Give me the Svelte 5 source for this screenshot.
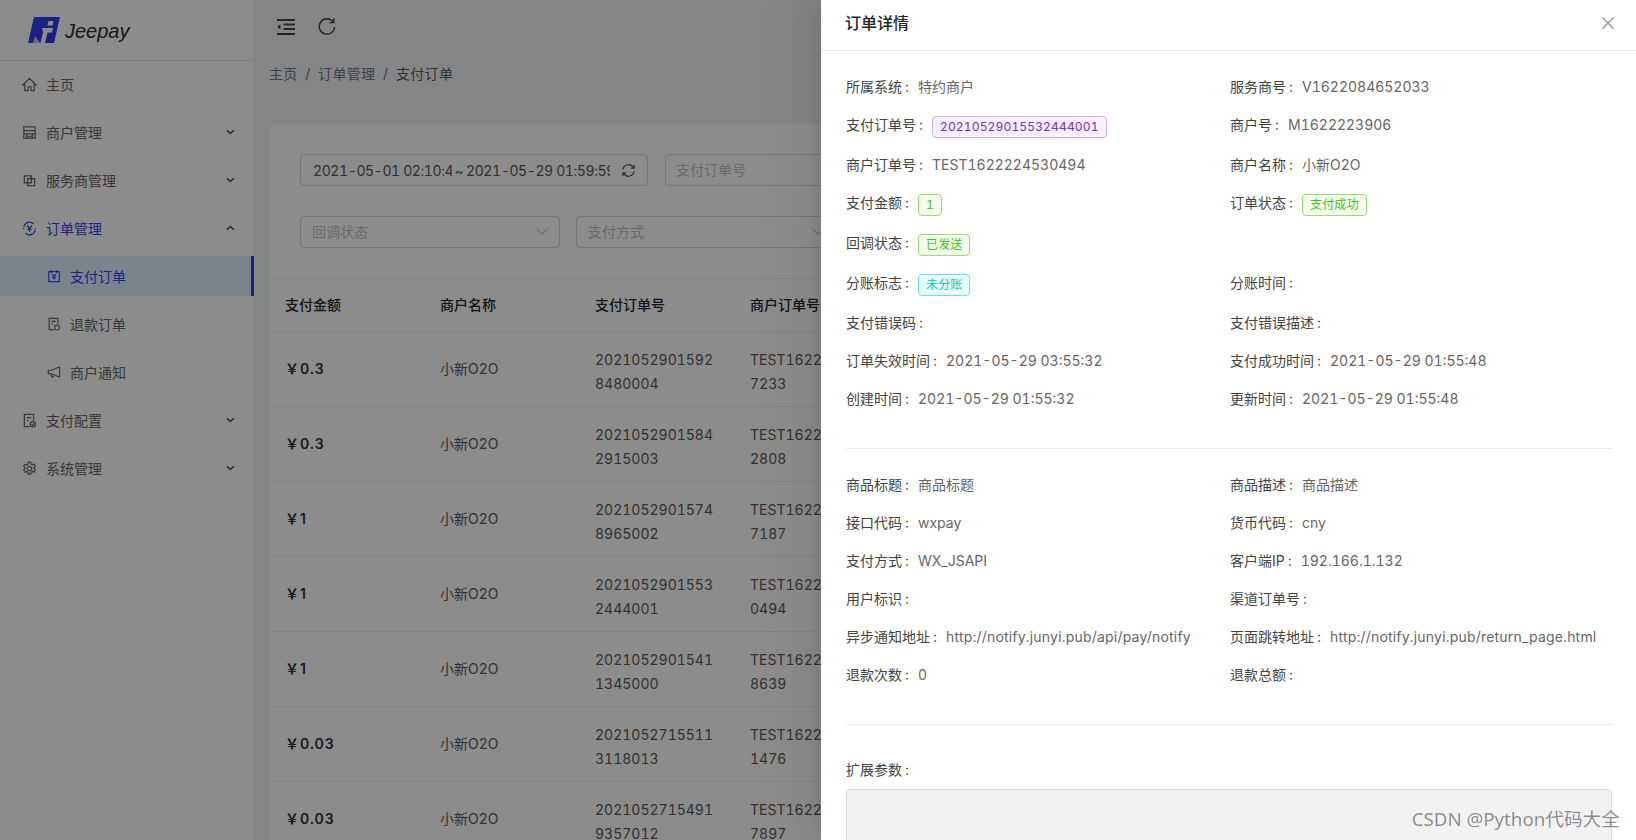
<script>
	const orders = [
		{ amount: '0.3', order: '20210529015928480004', mch: 'TEST1622224857233' },
		{ amount: '0.3', order: '20210529015842915003', mch: 'TEST1622224842808' },
		{ amount: '1', order: '20210529015748965002', mch: 'TEST1622224787187' },
		{ amount: '1', order: '20210529015532444001', mch: 'TEST1622224530494' },
		{ amount: '1', order: '20210529015411345000', mch: 'TEST1622224458639' },
		{ amount: '0.03', order: '20210527155113118013', mch: 'TEST1622101501476' },
		{ amount: '0.03', order: '20210527154919357012', mch: 'TEST1622101387897' }
	];

	const infoRows = [
		[{ label: '所属系统', value: '特约商户' }, { label: '服务商号', value: 'V1622084652033' }],
		[{ label: '支付订单号', value: '20210529015532444001', tag: 'purple' }, { label: '商户号', value: 'M1622223906' }],
		[{ label: '商户订单号', value: 'TEST1622224530494' }, { label: '商户名称', value: '小新O2O' }],
		[{ label: '支付金额', value: '1', tag: 'green' }, { label: '订单状态', value: '支付成功', tag: 'green' }],
		[{ label: '回调状态', value: '已发送', tag: 'green' }, null],
		[{ label: '分账标志', value: '未分账', tag: 'cyan' }, { label: '分账时间' }],
		[{ label: '支付错误码' }, { label: '支付错误描述' }],
		[{ label: '订单失效时间', value: '2021-05-29 03:55:32' }, { label: '支付成功时间', value: '2021-05-29 01:55:48' }],
		[{ label: '创建时间', value: '2021-05-29 01:55:32' }, { label: '更新时间', value: '2021-05-29 01:55:48' }]
	];

	const goodsRows = [
		[{ label: '商品标题', value: '商品标题' }, { label: '商品描述', value: '商品描述' }],
		[{ label: '接口代码', value: 'wxpay' }, { label: '货币代码', value: 'cny' }],
		[{ label: '支付方式', value: 'WX_JSAPI' }, { label: '客户端IP', value: '192.166.1.132' }],
		[{ label: '用户标识' }, { label: '渠道订单号' }],
		[{ label: '异步通知地址', value: 'http://notify.junyi.pub/api/pay/notify' }, { label: '页面跳转地址', value: 'http://notify.junyi.pub/return_page.html' }],
		[{ label: '退款次数', value: '0' }, { label: '退款总额' }]
	];
</script>

{#snippet chevron(up)}
	<svg class="chevron" class:up viewBox="0 0 10 6"><path d="M1 1l4 3.6L9 1" /></svg>
{/snippet}

{#snippet descriptions(rows)}
	<div class="desc">
		{#each rows as row}
			{#each row as item}
				<div class="item">
					{#if item}
						<span class="label">{item.label}</span>
						{#if item.tag}
							<span class="tag {item.tag}">{item.value}</span>
						{:else if item.value}
							<span class="value" class:url={item.value.startsWith('http')}>{item.value}</span>
						{/if}
					{/if}
				</div>
			{/each}
		{/each}
	</div>
{/snippet}

<div class="page">
	<aside class="sider">
		<div class="logo">
			<svg width="32" height="26" viewBox="0 0 32 26">
				<path d="M6 0h26l-6 26H0z" fill="#2f3cf0" />
				<path d="M20.500 4h5l-1 4.500h-5z" fill="#fff" />
				<path d="M14 11h11l-1 4.500h-4.500L17 26h-4.500l2.500-11z" fill="#fff" />
				<path d="M5 26l2-7 5 7z" fill="#b9c4e8" />
			</svg>
			<span class="brand">Jeepay</span>
		</div>
		<nav class="menu">
			<div class="menu-item">
				<svg class="ico" viewBox="0 0 16 16"><path d="M8 1.500L1 8.500h2v6h3.500v-4h3v4H13v-6h2z" /></svg>
				<span>主页</span>
			</div>
			<div class="menu-item">
				<svg class="ico" viewBox="0 0 16 16"><path d="M2 2h12v12H2zM2 6h12M2 9.500h12M5 9.500V14M11 9.500V14M5 12h6" /></svg>
				<span>商户管理</span>
				{@render chevron(false)}
			</div>
			<div class="menu-item">
				<svg class="ico" viewBox="0 0 16 16"><path d="M2.500 3h7.500v7.500H2.500zM6 6h7.500v7.500H6z" /></svg>
				<span>服务商管理</span>
				{@render chevron(false)}
			</div>
			<div class="menu-item open">
				<svg class="ico" viewBox="0 0 16 16"><path d="M2 6a6.300 6.300 0 0 1 10.500-3M14 10a6.300 6.300 0 0 1-10.500 3M14.300 7.500a6 6 0 0 1 0 1M1.700 7.500a6 6 0 0 0 0 1M5.500 5L8 8l2.500-3M8 8v3.500M5.800 9h4.400" /></svg>
				<span>订单管理</span>
				{@render chevron(true)}
			</div>
			<div class="menu-item sub selected">
				<svg class="ico" viewBox="0 0 16 16"><path d="M2 3h12v11.500H2zM5 1v3.500M11 1v3.500M5.800 6L8 8.500 10.200 6M8 8.500V12M6 9.800h4" /></svg>
				<span>支付订单</span>
			</div>
			<div class="menu-item sub">
				<svg class="ico" viewBox="0 0 16 16"><path d="M8 14.500H2.500v-13h10V8M5 5h5M5 8h2.500" /><circle cx="11.500" cy="12" r="2.800" /></svg>
				<span>退款订单</span>
			</div>
			<div class="menu-item sub">
				<svg class="ico" viewBox="0 0 16 16"><path d="M14.500 2v12M14.500 2L5 6H1.500v4H5l9.500 4M4.500 10.200l1 3.500 2.500-.8" /></svg>
				<span>商户通知</span>
			</div>
			<div class="menu-item">
				<svg class="ico" viewBox="0 0 16 16"><path d="M8 14.500H2.500v-13h10V8M5 5h5M5 8h2.500" /><circle cx="11.500" cy="12" r="2.800" /><path d="M10.200 12l1 1 1.500-1.700" /></svg>
				<span>支付配置</span>
				{@render chevron(false)}
			</div>
			<div class="menu-item">
				<svg class="ico" viewBox="0 0 16 16"><circle cx="8" cy="8" r="2.300" /><path d="M6.700 1.300h2.600l.4 2 1.300.7 1.900-.7 1.300 2.300-1.500 1.300v1.400l1.500 1.300-1.300 2.300-1.900-.7-1.300.7-.4 2H6.700l-.4-2-1.300-.7-1.900.7-1.300-2.300 1.500-1.300V7.300L1.800 6l1.300-2.300 1.900.7 1.300-.7z" /></svg>
				<span>系统管理</span>
				{@render chevron(false)}
			</div>
		</nav>
	</aside>

	<main class="content">
		<header class="topbar">
			<svg class="fold" viewBox="0 0 18 16"><path d="M0 1h18M6.500 5.500H18M6.500 10H18M0 15h18" /><path class="solid" d="M0 7.800L3.500 5.200v5.200z" /></svg>
			<svg class="reload" viewBox="0 0 18 18"><path d="M15.300 5.200A7.700 7.700 0 1 0 16.600 10" /><path d="M15.800 1.300v4.300h-4.300" /></svg>
		</header>
		<div class="crumbs">
			<span>主页</span><i>/</i><span>订单管理</span><i>/</i><b>支付订单</b>
		</div>
		<section class="card">
			<div class="filters">
				<div class="row">
					<div class="field range">
						<span class="date">2021-05-01 02:10:45</span>
						<span class="tilde">~</span>
						<span class="date">2021-05-29 01:59:59</span>
						<svg class="sync" viewBox="0 0 16 16"><path d="M2 7a6 6 0 0 1 10.500-3l1.500 1.500M14 9a6 6 0 0 1-10.500 3L2 10.500M14 2v3.500h-3.500M2 14v-3.500h3.500" /></svg>
					</div>
					<div class="field order-no"><span class="ph">支付订单号</span></div>
				</div>
				<div class="row second">
					<div class="field select">
						<span class="ph">回调状态</span>
						<svg viewBox="0 0 12 8"><path d="M1 1l5 5.500L11 1" /></svg>
					</div>
					<div class="field select">
						<span class="ph">支付方式</span>
						<svg viewBox="0 0 12 8"><path d="M1 1l5 5.500L11 1" /></svg>
					</div>
				</div>
			</div>
			<table>
				<thead>
					<tr>
						<th>支付金额</th>
						<th>商户名称</th>
						<th>支付订单号</th>
						<th>商户订单号</th>
					</tr>
				</thead>
				<tbody>
					{#each orders as o}
						<tr>
							<td class="amount">￥{o.amount}</td>
							<td>小新O2O</td>
							<td class="num">{o.order}</td>
							<td class="num">{o.mch}</td>
						</tr>
					{/each}
				</tbody>
			</table>
		</section>
	</main>

	<div class="mask"></div>

	<div class="drawer">
		<div class="drawer-head">
			<span>订单详情</span>
			<svg class="close" viewBox="0 0 12 12"><path d="M.5.500l11 11M11.500.500l-11 11" /></svg>
		</div>
		<div class="drawer-body">
			{@render descriptions(infoRows)}
			<hr />
			{@render descriptions(goodsRows)}
			<hr class="last" />
			<div class="ext">
				<div class="label">扩展参数</div>
				<div class="ext-box"></div>
			</div>
		</div>
	</div>

	<div class="watermark">CSDN @Python代码大全</div>
</div>

<style>
	:global(body) {
		margin: 0;
		font-family: Inter, "Noto Sans CJK SC", sans-serif;
		font-size: 14px;
	}

	.page {
		position: relative;
		display: flex;
		width: 1636px;
		height: 840px;
		overflow: hidden;
		background: #f0f2f5;
		color: #595959;
	}

	.sider {
		width: 254px;
		flex: none;
		background: #fff;
	}

	.logo {
		display: flex;
		align-items: center;
		gap: 5px;
		height: 61px;
		padding-left: 28px;
		box-sizing: border-box;
		border-bottom: 1px solid #e8e8e8;
	}

	.brand {
		font-family: "Liberation Sans", sans-serif;
		font-style: italic;
		font-size: 20px;
		color: #2a2a2a;
		margin-top: 3px;
	}

	.menu {
		display: flex;
		flex-direction: column;
		gap: 8px;
		padding-top: 3px;
	}

	.menu-item {
		display: flex;
		align-items: center;
		height: 40px;
		padding-left: 22px;
		padding-right: 19px;
		color: #666;
		position: relative;
	}

	.menu-item span {
		margin-left: 9px;
		flex: 1;
	}

	.ico {
		width: 15px;
		height: 15px;
		fill: none;
		stroke: currentColor;
		stroke-width: 1.300;
	}

	.menu-item.sub {
		padding-left: 47px;
	}

	.menu-item.sub .ico {
		width: 14px;
		height: 14px;
	}

	.open,
	.selected {
		color: #3340ee;
	}

	.selected {
		background: #dcf0ff;
		border-right: 3px solid #3340ee;
	}

	.chevron {
		width: 9px;
		height: 6px;
		fill: none;
		stroke: currentColor;
		stroke-width: 1.700;
		color: #555;
	}

	.chevron.up {
		transform: rotate(180deg);
	}

	.content {
		flex: 1;
		min-width: 0;
	}

	.topbar {
		display: flex;
		align-items: flex-start;
		height: 60px;
	}

	.fold {
		width: 18px;
		height: 16px;
		margin: 19px 0 0 23px;
		fill: none;
		stroke: #444;
		stroke-width: 2;
	}

	.fold .solid {
		fill: #444;
		stroke: none;
	}

	.reload {
		width: 18px;
		height: 18px;
		margin: 17px 0 0 23px;
		fill: none;
		stroke: #444;
		stroke-width: 1.400;
	}

	.crumbs {
		display: flex;
		align-items: center;
		height: 26px;
		padding-left: 15px;
		color: #777;
		letter-spacing: .35px;
	}

	.crumbs i {
		font-style: normal;
		margin: 0 7.500px;
	}

	.crumbs b {
		font-weight: 400;
		color: #595959;
	}

	.card {
		margin: 38px 15px 0;
		background: #fff;
		border-radius: 8px 8px 0 0;
	}

	.filters {
		padding: 30px 31px 0;
		height: 154px;
		box-sizing: border-box;
	}

	.row {
		display: flex;
		gap: 17px;
	}

	.second {
		margin-top: 30px;
		gap: 16px;
	}

	.field {
		display: flex;
		align-items: center;
		height: 32px;
		box-sizing: border-box;
		border: 1px solid #d9d9d9;
		border-radius: 4px;
	}

	.range {
		width: 348px;
		padding-left: 12px;
		font-variant-numeric: tabular-nums;
		letter-spacing: -.4px;
	}

	.date {
		width: 139px;
		overflow: hidden;
		white-space: nowrap;
		flex: none;
		color: #595959;
	}

	.date + .tilde + .date {
		width: 144px;
	}

	.tilde {
		width: 14px;
		text-align: center;
		flex: none;
	}

	.sync {
		width: 15px;
		height: 15px;
		margin-left: 11px;
		flex: none;
		fill: none;
		stroke: #595959;
		stroke-width: 1.300;
	}

	.order-no {
		flex: 1;
		padding-left: 10px;
	}

	.ph {
		color: #bfbfbf;
		flex: 1;
		padding-bottom: 2px;
	}

	.select {
		width: 260px;
		padding: 0 11px;
	}

	.select svg {
		width: 12px;
		height: 8px;
		fill: none;
		stroke: #bfbfbf;
		stroke-width: 1.100;
	}

	table {
		border-collapse: collapse;
		table-layout: fixed;
		width: 620px;
	}

	th,
	td {
		width: 123px;
		padding: 0 16px;
		text-align: left;
		border-top: 1px solid #f0f0f0;
	}

	th {
		height: 53px;
		padding-bottom: 2px;
		box-sizing: border-box;
		font-weight: 500;
		color: #262626;
	}

	td {
		height: 74px;
		line-height: 24px;
		color: #595959;
		font-variant-numeric: tabular-nums;
	}

	.num {
		word-break: break-all;
		padding-top: 5px;
		box-sizing: border-box;
	}

	.amount {
		font-weight: 600;
		color: #333;
		letter-spacing: .9px;
		font-variant-numeric: normal;
	}

	.mask {
		position: absolute;
		inset: 0;
		background: rgba(0, 0, 0, .45);
	}

	.drawer {
		position: absolute;
		top: 0;
		right: 0;
		bottom: 0;
		width: 815px;
		background: #fff;
		box-shadow: -6px 0 16px -8px rgba(0, 0, 0, .08), -9px 0 28px 0 rgba(0, 0, 0, .05), -12px 0 48px 16px rgba(0, 0, 0, .03);
	}

	.drawer-head {
		display: flex;
		align-items: center;
		justify-content: space-between;
		height: 44px;
		padding: 0 22px 6px 24px;
		border-bottom: 1px solid #e8e8e8;
		font-size: 16px;
		font-weight: 500;
		color: #262626;
	}

	.close {
		width: 12px;
		height: 12px;
		margin-top: 2px;
		fill: none;
		stroke: #8c8c8c;
		stroke-width: 1.100;
	}

	.drawer-body {
		padding: 25px 24px 0 25px;
	}

	.desc {
		display: grid;
		grid-template-columns: 384px 1fr;
	}

	.item {
		display: flex;
		align-items: flex-start;
		padding-bottom: 16px;
		line-height: 22px;
		min-height: 22px;
		white-space: nowrap;
	}

	.label {
		color: #444;
		line-height: 22px;
	}

	.label::after {
		content: ":";
		display: inline-block;
		width: 13px;
		margin-left: 3px;
	}

	.value {
		color: #666;
		font-variant-numeric: tabular-nums;
	}

	.value.url {
		letter-spacing: .2px;
	}

	.tag {
		box-sizing: border-box;
		height: 22px;
		line-height: 20px;
		margin-top: 2px;
		padding: 0 7px;
		font-size: 12px;
		letter-spacing: .15px;
		font-variant-numeric: tabular-nums;
		border: 1px solid;
		border-radius: 4px;
	}

	.purple {
		color: #722ed1;
		background: #f9f0ff;
		border-color: #d3adf7;
	}

	.green {
		color: #3cc41a;
		background: #f6ffed;
		border-color: #95e06c;
	}

	.cyan {
		color: #13c2c2;
		background: #e6fffb;
		border-color: #66e3dc;
	}

	hr {
		margin: 22px 0 25px;
		border: 0;
		border-top: 1px solid #e8e8e8;
	}

	hr.last {
		margin: 22px 0 24px;
	}

	.ext {
		padding-top: 10px;
	}

	.ext .label {
		margin-bottom: 8px;
	}

	.ext-box {
		height: 120px;
		background: #f2f2f2;
		border: 1px solid #d9d9d9;
		border-radius: 4px;
	}

	.watermark {
		position: absolute;
		right: 16px;
		bottom: 9px;
		font-family: "Noto Sans", "Noto Sans CJK SC", sans-serif;
		font-size: 18.700px;
		color: rgba(90, 90, 90, .7);
		text-shadow: 0 0 2px #fff;
	}
</style>
